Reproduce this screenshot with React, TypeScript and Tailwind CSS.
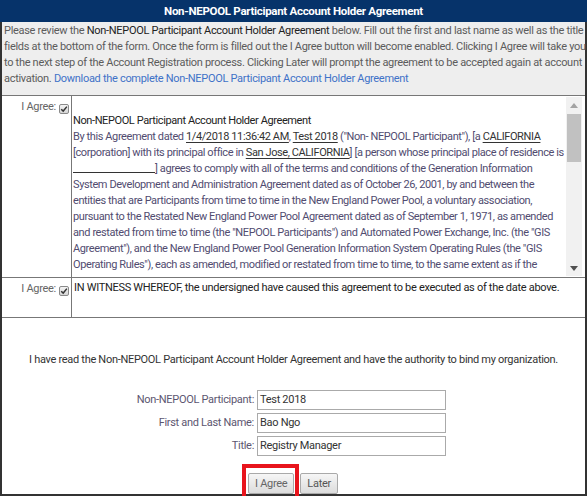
import React from "react";

function Check() {
  return (
    <span className="inline-flex h-[10px] w-[10px] items-center justify-center rounded-[2px] border border-[#8a8a8a] bg-gradient-to-b from-[#f4f4f4] to-[#d6d6d6]">
      <svg viewBox="0 0 10 10" className="h-[8px] w-[8px]">
        <path d="M1.5 5.2 L4 7.6 L8.6 2" fill="none" stroke="#333" strokeWidth="1.8" />
      </svg>
    </span>
  );
}

function U({ children }: { children: React.ReactNode }) {
  return <span className="text-[#333] underline underline-offset-[2px]">{children}</span>;
}

function FakeScrollbar() {
  return (
    <div className="flex w-[16px] shrink-0 flex-col items-center bg-[#f1f1f1]">
      <div className="flex h-[16px] w-full items-center justify-center">
        <svg viewBox="0 0 8 5" className="h-[5px] w-[8px]">
          <path d="M0 5 L4 0 L8 5 Z" fill="#a3a3a3" />
        </svg>
      </div>
      <div className="mt-[1px] h-[48px] w-[14px] bg-[#c1c1c1]" />
      <div className="flex-1" />
      <div className="flex h-[16px] w-full items-center justify-center">
        <svg viewBox="0 0 8 5" className="h-[5px] w-[8px]">
          <path d="M0 0 L8 0 L4 5 Z" fill="#505050" />
        </svg>
      </div>
    </div>
  );
}

export default function App() {
  return (
    <div className="w-[587px] text-[11px] leading-[16px] tracking-[-0.3px] text-[#555] [font-family:Roboto,'Liberation_Sans',sans-serif]">
      <div className="border-x-2 border-b-2 border-[#333]">
        <div className="-mx-[2px] flex h-[22px] items-center justify-center bg-[#06336a] text-[11.5px] font-bold text-white">
          Non-NEPOOL Participant Account Holder Agreement
        </div>
        <div className="border-b border-[#777] bg-[#eeeeee] pb-[8px] pl-[2px] pt-[1px] text-[#5c5c5c]">
          <div className="whitespace-nowrap">
            Please review the <span className="text-[#222]">Non-NEPOOL Participant Account Holder Agreement</span> below. Fill out the first and last name as well as the title
          </div>
          <div className="whitespace-nowrap">
            fields at the bottom of the form. Once the form is filled out the I Agree button will become enabled. Clicking I Agree will take you
          </div>
          <div className="whitespace-nowrap">
            to the next step of the Account Registration process. Clicking Later will prompt the agreement to be accepted again at account
          </div>
          <div className="whitespace-nowrap">
            activation. <span className="text-[#3f72c8]">Download the complete Non-NEPOOL Participant Account Holder Agreement</span>
          </div>
        </div>

        <div className="flex border-b border-[#777]">
          <div className="flex w-[70px] shrink-0 items-start justify-end gap-[3px] border-r border-[#777] pr-[2px] pt-[3px]">
            <span className="text-[#666]">I Agree:</span>
            <span className="mt-[3px]"><Check /></span>
          </div>
          <div className="flex h-[181px] min-w-0 flex-1 pb-[1px] pr-[3px] pt-[1px]">
            <div className="min-w-0 flex-1 overflow-hidden pl-[1px] tracking-[-0.4px] text-[#514c70]">
              <div className="h-[16px]" />
              <div className="text-[#222]">Non-NEPOOL Participant Account Holder Agreement</div>
              <div className="whitespace-nowrap">
                By this Agreement dated <U>1/4/2018 11:36:42 AM</U>, <U>Test 2018</U> ("Non- NEPOOL Participant"), [a <U>CALIFORNIA</U>
              </div>
              <div className="whitespace-nowrap">
                [corporation] with its principal office in <U>San Jose, CALIFORNIA</U>] [a person whose principal place of residence is
              </div>
              <div className="whitespace-nowrap">
                <span className="inline-block h-[12px] w-[82px] border-b border-[#333] align-[-1px]" />] agrees to comply with all of the terms and conditions of the Generation Information
              </div>
              <div className="whitespace-nowrap">System Development and Administration Agreement dated as of October 26, 2001, by and between the</div>
              <div className="whitespace-nowrap">entities that are Participants from time to time in the New England Power Pool, a voluntary association,</div>
              <div className="whitespace-nowrap">pursuant to the Restated New England Power Pool Agreement dated as of September 1, 1971, as amended</div>
              <div className="whitespace-nowrap">and restated from time to time (the "NEPOOL Participants") and Automated Power Exchange, Inc. (the "GIS</div>
              <div className="whitespace-nowrap">Agreement"), and the New England Power Pool Generation Information System Operating Rules (the "GIS</div>
              <div className="whitespace-nowrap">Operating Rules"), each as amended, modified or restated from time to time, to the same extent as if the</div>
            </div>
            <FakeScrollbar />
          </div>
        </div>

        <div className="flex h-[40px] border-b border-[#777]">
          <div className="flex w-[70px] shrink-0 items-start justify-end gap-[3px] border-r border-[#777] pr-[2px] pt-[3px]">
            <span className="text-[#666]">I Agree:</span>
            <span className="mt-[3px]"><Check /></span>
          </div>
          <div className="flex-1 whitespace-nowrap pl-[2px] pt-[2px] text-[#222]">
            IN WITNESS WHEREOF, the undersigned have caused this agreement to be executed as of the date above.
          </div>
        </div>

        <div className="flex flex-col pt-[34px]">
          <div className="text-center text-[#333]">
            I have read the Non-NEPOOL Participant Account Holder Agreement and have the authority to bind my organization.
          </div>
          <div className="mt-[22px] flex flex-col gap-[3px]">
            {[
              ["Non-NEPOOL Participant:", "Test 2018"],
              ["First and Last Name:", "Bao Ngo"],
              ["Title:", "Registry Manager"],
            ].map(([l, v]) => (
              <div key={l} className="flex items-center">
                <div className="w-[252px] text-right text-[#5c5670]">{l}</div>
                <div className="ml-[3px] flex h-[20px] w-[189px] items-center border border-[#aaa] bg-white pl-[2px] text-[#333]">
                  {v}
                </div>
              </div>
            ))}
          </div>
          <div className="mt-[17px] flex justify-center gap-[6px] pr-[1px]">
            <div className="relative">
              <button className="flex h-[21px] items-center rounded-[2px] border border-[#a9a9a9] bg-gradient-to-b from-[#f6f6f6] to-[#dcdcdc] px-[6px] text-[#666]">
                I Agree
              </button>
              <div className="pointer-events-none absolute -bottom-[6px] -left-[6px] -right-[5px] -top-[9px] border-[4px] border-[#e8141c]" />
            </div>
            <button className="flex h-[21px] items-center rounded-[2px] border border-[#a9a9a9] bg-gradient-to-b from-[#f6f6f6] to-[#dcdcdc] px-[6px] text-[#555]">
              Later
            </button>
          </div>
        </div>
      </div>
    </div>
  );
}
